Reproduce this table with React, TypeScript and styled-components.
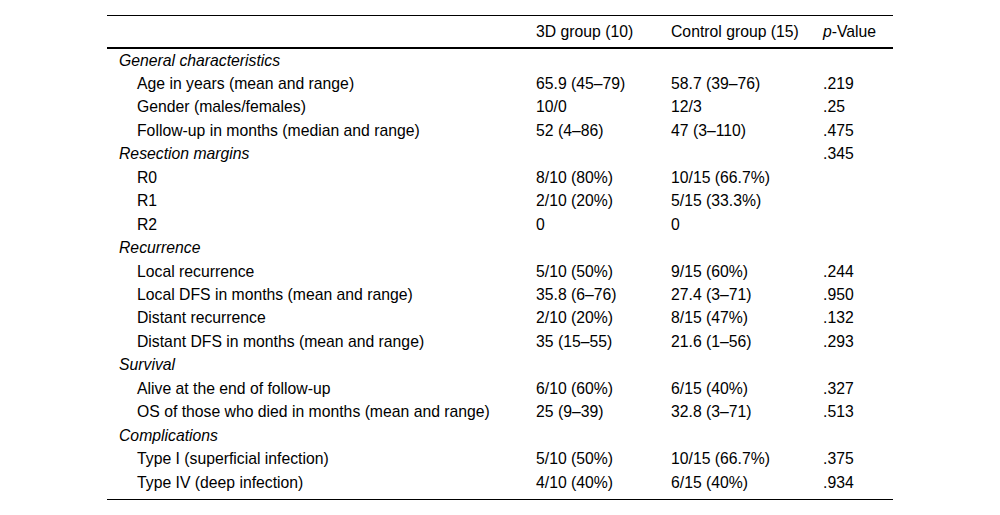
import styled, { createGlobalStyle } from "styled-components";

const GlobalStyle = createGlobalStyle`
  html, body {
    margin: 0;
    padding: 0;
    background: #fff;
  }
  body {
    font-family: "Liberation Sans", Arial, sans-serif;
    color: #000;
  }
`;

const Page = styled.div`
  width: 1000px;
  height: 515px;
  padding-top: 15px;
  box-sizing: border-box;
`;

const Table = styled.table`
  width: 786px;
  margin: 0 auto;
  border-collapse: collapse;
  table-layout: fixed;
  font-size: 15.75px;
  border-top: 1px solid #000;
  border-bottom: 1px solid #000;
`;

const HeadCell = styled.th<{ $w: number }>`
  box-sizing: border-box;
  width: ${(p) => p.$w}px;
  height: 32px;
  padding: 1px 12px 0;
  text-align: left;
  font-weight: normal;
  white-space: nowrap;
  border-bottom: 2px solid #000;
  vertical-align: middle;
`;

const Row = styled.tr`
  &:last-child td {
    padding-bottom: 5px;
  }
`;

const Cell = styled.td<{ $indent?: boolean; $italic?: boolean }>`
  padding: 0 12px 0 ${(p) => (p.$indent ? 30 : 12)}px;
  line-height: 23.45px;
  height: 23.45px;
  white-space: nowrap;
  vertical-align: top;
  font-style: ${(p) => (p.$italic ? "italic" : "normal")};
`;

type Line =
  | { kind: "section"; label: string; p?: string }
  | { kind: "item"; label: string; a: string; b: string; p?: string };

const rows: Line[] = [
  { kind: "section", label: "General characteristics" },
  { kind: "item", label: "Age in years (mean and range)", a: "65.9 (45–79)", b: "58.7 (39–76)", p: ".219" },
  { kind: "item", label: "Gender (males/females)", a: "10/0", b: "12/3", p: ".25" },
  { kind: "item", label: "Follow-up in months (median and range)", a: "52 (4–86)", b: "47 (3–110)", p: ".475" },
  { kind: "section", label: "Resection margins", p: ".345" },
  { kind: "item", label: "R0", a: "8/10 (80%)", b: "10/15 (66.7%)" },
  { kind: "item", label: "R1", a: "2/10 (20%)", b: "5/15 (33.3%)" },
  { kind: "item", label: "R2", a: "0", b: "0" },
  { kind: "section", label: "Recurrence" },
  { kind: "item", label: "Local recurrence", a: "5/10 (50%)", b: "9/15 (60%)", p: ".244" },
  { kind: "item", label: "Local DFS in months (mean and range)", a: "35.8 (6–76)", b: "27.4 (3–71)", p: ".950" },
  { kind: "item", label: "Distant recurrence", a: "2/10 (20%)", b: "8/15 (47%)", p: ".132" },
  { kind: "item", label: "Distant DFS in months (mean and range)", a: "35 (15–55)", b: "21.6 (1–56)", p: ".293" },
  { kind: "section", label: "Survival" },
  { kind: "item", label: "Alive at the end of follow-up", a: "6/10 (60%)", b: "6/15 (40%)", p: ".327" },
  { kind: "item", label: "OS of those who died in months (mean and range)", a: "25 (9–39)", b: "32.8 (3–71)", p: ".513" },
  { kind: "section", label: "Complications" },
  { kind: "item", label: "Type I (superficial infection)", a: "5/10 (50%)", b: "10/15 (66.7%)", p: ".375" },
  { kind: "item", label: "Type IV (deep infection)", a: "4/10 (40%)", b: "6/15 (40%)", p: ".934" },
];

export default function App() {
  return (
    <>
      <GlobalStyle />
      <Page>
        <Table>
          <thead>
            <tr>
              <HeadCell $w={417} />
              <HeadCell $w={135}>3D group (10)</HeadCell>
              <HeadCell $w={152}>Control group (15)</HeadCell>
              <HeadCell $w={82}>
                <i>p</i>-Value
              </HeadCell>
            </tr>
          </thead>
          <tbody>
            {rows.map((r, i) =>
              r.kind === "section" ? (
                <Row key={i}>
                  <Cell $italic>{r.label}</Cell>
                  <Cell />
                  <Cell />
                  <Cell>{r.p}</Cell>
                </Row>
              ) : (
                <Row key={i}>
                  <Cell $indent>{r.label}</Cell>
                  <Cell>{r.a}</Cell>
                  <Cell>{r.b}</Cell>
                  <Cell>{r.p}</Cell>
                </Row>
              )
            )}
          </tbody>
        </Table>
      </Page>
    </>
  );
}
